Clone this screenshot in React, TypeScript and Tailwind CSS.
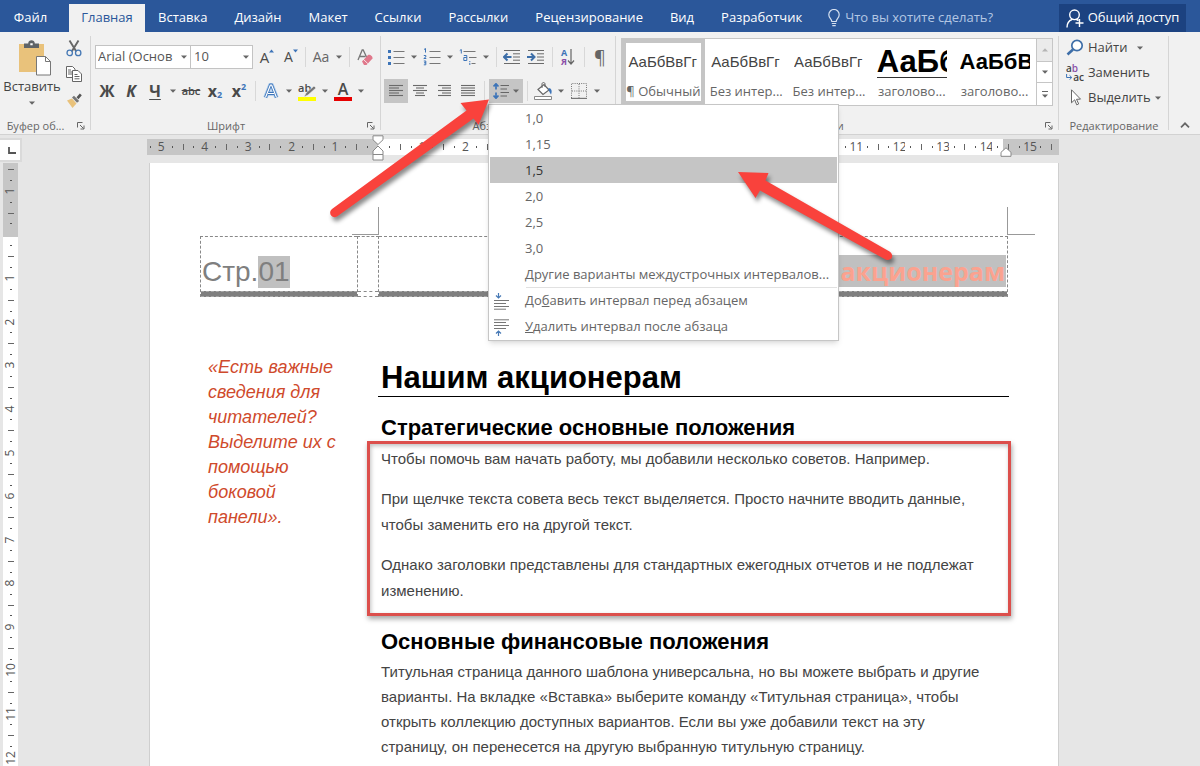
import type { ReactNode } from "react";

const tabs = ["Вставка", "Дизайн", "Макет", "Ссылки", "Рассылки", "Рецензирование", "Вид", "Разработчик"];
const spacings = ["1,0", "1,15", "1,5", "2,0", "2,5", "3,0", "Другие варианты междустрочных интервалов..."];

function Caret() {
  return (
    <svg viewBox="0 0 6 4" className="h-1 w-1.5 text-[#666]" aria-hidden="true">
      <path d="M0 0.5h6L3 3.7z" fill="currentColor" />
    </svg>
  );
}

function Tool({ label, active = false, children }: { label: string; active?: boolean; children: ReactNode }) {
  return (
    <button
      type="button"
      aria-label={label}
      className={`flex h-6 w-6 shrink-0 items-center justify-center text-base font-bold leading-6 text-[#4a4a4a] ${active ? "bg-[#c5c5c5]" : ""}`}
    >
      {children}
    </button>
  );
}

function Drop({ label }: { label: string }) {
  return (
    <button type="button" aria-label={label} className="flex h-6 w-3 shrink-0 items-center justify-center">
      <Caret />
    </button>
  );
}

function Divider() {
  return (
    <span className="flex h-6 w-2 shrink-0 items-center justify-center">
      <span className="h-5 w-px bg-[#d8d8d8]" />
    </span>
  );
}

function Launcher({ label }: { label: string }) {
  return (
    <button type="button" aria-label={label} className="absolute right-1 bottom-0.5 flex h-3 w-3 items-center justify-center">
      <svg viewBox="0 0 8 8" className="h-2 w-2" fill="none" stroke="#666" aria-hidden="true">
        <path d="M0.5 5.5v-5h5M3 3l3.6 3.6M7 3.5V7H3.5" />
      </svg>
    </button>
  );
}

function Group({ title, launcher = true, className, children }: { title: string; launcher?: boolean; className: string; children: ReactNode }) {
  return (
    <section aria-label={title} className={`relative flex flex-col ${className}`}>
      <div className="flex-1">{children}</div>
      <h2 className={`h-4 text-[11px] leading-4 whitespace-nowrap text-[#666] ${launcher ? "pr-5 text-center" : "text-center"}`}>{title}</h2>
      {launcher && <Launcher label={`${title}: параметры`} />}
      <span className="absolute top-1 right-0 bottom-1 w-px bg-[#d5d5d5]" />
    </section>
  );
}

function Lines({ rows }: { rows: [number, number][] }) {
  return (
    <svg viewBox="0 0 16 14" className="h-3.5 w-4" stroke="#6a6a6a" aria-hidden="true">
      {rows.map(([a, b], i) => (
        <path key={i} d={`M${a} ${1.5 + i * 2.5}H${b}`} strokeWidth="1.1" />
      ))}
    </svg>
  );
}

function Clipboard() {
  return (
    <Group title="Буфер об..." className="w-[91px] shrink-0">
      <div className="flex pt-2">
        <button type="button" className="flex w-16 flex-col items-center text-[13px] leading-[18px] text-[#444]">
          <svg viewBox="0 0 34 36" className="ml-1.5 h-9 w-[34px]" aria-hidden="true">
            <path d="M1 4h25v28H1z" fill="#e9c27b" />
            <path d="M6 3.500h4.200C10.200-.8 16.800-.8 16.800 3.500H21V8H6z" fill="#5f6468" />
            <path d="M12.300 3.300h2.400v2h-2.400z" fill="#fff" />
            <path d="M18.500 16.500h9l5 5v13.500h-14z" fill="#fff" stroke="#777" />
            <path d="M27.500 16.500v5h5" fill="none" stroke="#777" />
          </svg>
          <span className="mt-px">Вставить</span>
          <span className="mt-1.5">
            <Caret />
          </span>
        </button>
        <div className="-ml-0.5 flex flex-col gap-0.5">
          <Tool label="Вырезать">
            <svg viewBox="0 0 16 17" className="-mt-2 h-[17px] w-4" fill="none" aria-hidden="true">
              <path d="M3.500 0.500l6.800 11M12.500 0.500l-6.800 11" stroke="#666" strokeWidth="1.900" />
              <circle cx="3.700" cy="12.900" r="2.700" stroke="#4779b5" strokeWidth="1.300" />
              <circle cx="12.200" cy="12.900" r="2.700" stroke="#4779b5" strokeWidth="1.300" />
            </svg>
          </Tool>
          <Tool label="Копировать">
            <svg viewBox="0 0 16 16" className="-mt-2 h-4 w-4" fill="#fff" stroke="#666" aria-hidden="true">
              <path d="M.5.5h6l2.500 2.500v8.500H.5zM2 4h3M2 6h4M2 8h4" />
              <path d="M6.500 4.500h5.500l3.500 3.500v7.500h-9zM8.500 8.500h3M8.500 10.500h5M8.500 12.800h5" />
            </svg>
          </Tool>
          <Tool label="Формат по образцу">
            <svg viewBox="0 0 16 15" className="-mt-2 h-[15px] w-4" aria-hidden="true">
              <path d="M1 7.500l5-2 4.500 5-4 4.500z" fill="#e9c27b" />
              <path d="M6 4.500l2-1.700 5.200 5.200-2.200 1.800z" fill="#777" />
              <path d="M10.500 4.200l3.300-3.800 2 1.800-3.300 4z" fill="#555" />
            </svg>
          </Tool>
        </div>
      </div>
    </Group>
  );
}

function FontGroup() {
  return (
    <Group title="Шрифт" className="w-[290px] shrink-0">
      <div className="flex flex-col gap-2.5 pt-[13px] pl-1">
        <div className="flex items-center">
          <div className="relative flex">
            <select aria-label="Шрифт" className="h-6 w-24 appearance-none border border-[#c3c3c3] bg-white pr-3 pl-0.5 text-[13px] text-[#555]">
              <option>Arial (Основ</option>
            </select>
            <span className="pointer-events-none absolute top-2 right-1 flex h-2 items-center">
              <Caret />
            </span>
          </div>
          <div className="relative -ml-px flex">
            <select aria-label="Размер шрифта" className="h-6 w-[63px] appearance-none border border-[#c3c3c3] bg-white pl-[3px] text-[13px] text-[#555]">
              <option>10</option>
            </select>
            <span className="pointer-events-none absolute top-2 right-1 flex h-2 items-center">
              <Caret />
            </span>
          </div>
          <Tool label="Увеличить размер шрифта">
            <span className="flex pl-1 text-[15px] font-normal">
              A
              <svg viewBox="0 0 5 4" className="mt-1 h-1 w-[5px]" fill="#3d74b8" aria-hidden="true">
                <path d="M0 3.500h5L2.500.5z" />
              </svg>
            </span>
          </Tool>
          <Tool label="Уменьшить размер шрифта">
            <span className="flex pl-1 text-sm leading-6 font-normal">
              A
              <svg viewBox="0 0 5 4" className="mt-1 h-1 w-[5px]" fill="#3d74b8" aria-hidden="true">
                <path d="M0 .5h5L2.500 3.500z" />
              </svg>
            </span>
          </Tool>
          <Divider />
          <Tool label="Регистр">
            <span className="text-sm font-normal text-[#666]">Aa</span>
          </Tool>
          <Drop label="Варианты регистра" />
          <Divider />
          <Tool label="Удалить форматирование">
            <svg viewBox="0 0 17 17" className="h-[17px] w-[17px]" aria-hidden="true">
              <path d="M1 11L5.200 1h1L10 9M2.800 7.500h5.500" fill="none" stroke="#777" strokeWidth="1.300" />
              <path d="M5 12.500l6-6.500c2-1 5 1.500 4.500 3.500l-6 6.500H7z" fill="#e0788b" />
              <path d="M6.300 10.300l4.500 4.300" stroke="#fff" strokeWidth=".8" />
            </svg>
          </Tool>
        </div>
        <div className="flex items-center">
          <Tool label="Полужирный">Ж</Tool>
          <Tool label="Курсив">
            <span className="italic">К</span>
          </Tool>
          <Tool label="Подчёркнутый">
            <span className="underline underline-offset-2">Ч</span>
          </Tool>
          <Drop label="Вид подчёркивания" />
          <Tool label="Зачёркнутый">
            <span className="text-[11px] font-semibold line-through">abc</span>
          </Tool>
          <Tool label="Подстрочный">
            <span className="text-base leading-6">x</span>
            <span className="pt-2 text-[9px] text-[#3d74b8]">2</span>
          </Tool>
          <Tool label="Надстрочный">
            <span className="text-base leading-6">x</span>
            <span className="pb-2 text-[9px] text-[#3d74b8]">2</span>
          </Tool>
          <Divider />
          <Tool label="Текстовые эффекты">
            <svg viewBox="0 0 16 17" className="h-[17px] w-4" fill="none" strokeLinejoin="round" aria-hidden="true">
              <path d="M2.500 14.500L7.400 2h1.200l4.900 12.500M5 10.500h6" stroke="#a8c8ea" strokeWidth="4.500" />
              <path d="M2.500 14.500L7.400 2h1.200l4.900 12.500M5 10.500h6" stroke="#3d74b8" strokeWidth="2.800" />
              <path d="M2.500 14.500L7.400 2h1.200l4.900 12.500M5 10.500h6" stroke="#fff" strokeWidth="1.200" />
            </svg>
          </Tool>
          <Drop label="Варианты эффектов" />
          <Tool label="Цвет выделения">
            <span className="relative flex h-[19px] w-[18px] items-start border-b-4 border-[#ffff00] text-[11px] leading-[11px] font-semibold">
              ab
              <svg viewBox="0 0 14 14" className="absolute top-0.5 right-0 h-3.5 w-3.5" aria-hidden="true">
                <path d="M2 13l2-4 8-7 2 2-8 7z" fill="#777" stroke="#f1f1f1" strokeWidth=".6" />
              </svg>
            </span>
          </Tool>
          <Drop label="Цвета выделения" />
          <Tool label="Цвет текста">
            <span className="flex h-[19px] w-[18px] items-center justify-center border-b-4 border-[#e60000] text-base leading-4 font-semibold">A</span>
          </Tool>
          <Drop label="Цвета текста" />
        </div>
      </div>
    </Group>
  );
}

function SpacingMenu() {
  return (
    <div role="menu" aria-label="Междустрочный интервал" className="absolute top-full -left-px z-20 mt-px w-[351px] border border-[#c6c6c6] bg-white px-px text-[13px] text-[#666] shadow-md">
      {spacings.map((s) => (
        <button key={s} type="button" role="menuitem" className={`block h-[26px] w-full pl-[35px] text-left leading-[26px] whitespace-nowrap ${s === "1,5" ? "bg-[#c5c5c5] text-[#333]" : ""}`}>
          {s}
        </button>
      ))}
      <div className="ml-9 h-px bg-[#e1e1e1]" />
      <button type="button" role="menuitem" className="flex h-[26px] w-full items-center gap-4 pl-[3px] text-left">
        <svg viewBox="0 0 16 17" className="h-[17px] w-4" fill="none" aria-hidden="true">
          <path d="M5.500 0v4.500M3 2.500l2.500 2.500L8 2.500" stroke="#4779b5" strokeWidth="1.200" />
          <path d="M1 7.500h15M1 10.500h12M1 13.500h15M1 16.200h12" stroke="#777" />
        </svg>
        <span>
          До<u>б</u>авить интервал перед абзацем
        </span>
      </button>
      <button type="button" role="menuitem" className="flex h-[26px] w-full items-center gap-4 pl-[3px] text-left">
        <svg viewBox="0 0 16 17" className="h-[17px] w-4" fill="none" aria-hidden="true">
          <path d="M1 .8h15M1 3.500h12M1 6.500h15M1 9.500h12" stroke="#777" />
          <path d="M5.500 17v-5M3 14.500l2.500-2.500L8 14.500" stroke="#4779b5" strokeWidth="1.200" />
        </svg>
        <span>
          <u>У</u>далить интервал после абзаца
        </span>
      </button>
    </div>
  );
}

function Indent({ right = false }: { right?: boolean }) {
  return (
    <svg viewBox="0 0 18 16" className="h-4 w-[18px]" fill="none" aria-hidden="true">
      <path d="M1 1.500h16M10 4.800h7M10 8h7M10 11.200h7M1 14.500h16" stroke="#6a6a6a" />
      <path d={right ? "M0 8h7M4 4.500L7.500 8 4 11.500" : "M1.500 8h7M4.500 4.500L1 8l3.500 3.500"} stroke="#3d6ea8" strokeWidth="2" />
    </svg>
  );
}

function Paragraph() {
  return (
    <Group title="Абзац" className="w-[235px] shrink-0">
      <div className="flex flex-col gap-2.5 pt-[13px] pl-[3px]">
        <div className="flex items-center">
          <Tool label="Маркеры">
            <svg viewBox="0 0 18 16" className="h-4 w-[18px]" aria-hidden="true">
              <path d="M1 1h3v3H1zM1 7h3v3H1zM1 13h3v3H1z" fill="#3d74b8" />
              <path d="M6.500 2.500h11M6.500 8.500h11M6.500 14.500h11" stroke="#777" />
            </svg>
          </Tool>
          <Drop label="Библиотека маркеров" />
          <Tool label="Нумерация">
            <svg viewBox="0 0 18 18" className="h-[18px] w-[18px]" aria-hidden="true">
              <path d="M1 1.500l1.500-1v4M.8 7.500h2v1.500l-2 1.500h2.500M.8 13h2v1.800h-1.500 1.500v2h-2" fill="none" stroke="#3d74b8" />
              <path d="M6.500 3.500h11M6.500 9.500h11M6.500 15.500h11" stroke="#777" />
            </svg>
          </Tool>
          <Drop label="Форматы нумерации" />
          <Tool label="Многоуровневый список">
            <svg viewBox="0 0 18 16" className="h-4 w-[18px]" fill="none" aria-hidden="true">
              <path d="M.8 1.500l1.500-1v4M4.800 6.500h3v5h-3v-3h3M10.800 12v1.200M10.800 14v2" stroke="#3d74b8" />
              <path d="M4.500 2.500h12M10 8.500h7.500M12.500 14.500h4" stroke="#777" />
            </svg>
          </Tool>
          <Drop label="Библиотека списков" />
          <Divider />
          <Tool label="Уменьшить отступ">
            <Indent />
          </Tool>
          <Tool label="Увеличить отступ">
            <Indent right />
          </Tool>
          <Divider />
          <Tool label="Сортировка">
            <span className="flex flex-col text-[9px] leading-[9px]">
              <span className="text-[#3d74b8]">А</span>
              <span className="text-[#8a4fa8]">Я</span>
            </span>
            <svg viewBox="0 0 8 16" className="h-4 w-2" fill="none" stroke="#666" strokeWidth="1.200" aria-hidden="true">
              <path d="M4 0v15M1 11.500l3 3.500 3-3.500" />
            </svg>
          </Tool>
          <Divider />
          <Tool label="Непечатаемые знаки">
            <span className="text-lg font-normal text-[#666]">¶</span>
          </Tool>
        </div>
        <div className="flex items-center">
          <Tool label="По левому краю" active>
            <Lines rows={[[1, 15], [1, 11], [1, 15], [1, 11], [1, 15]]} />
          </Tool>
          <Tool label="По центру">
            <Lines rows={[[1, 15], [4, 12], [1, 15], [4, 12], [3, 13]]} />
          </Tool>
          <Tool label="По правому краю">
            <Lines rows={[[2, 15], [6, 15], [2, 15], [6, 15], [2, 15]]} />
          </Tool>
          <Tool label="По ширине">
            <Lines rows={[[1, 15], [1, 15], [1, 15], [1, 15], [1, 15]]} />
          </Tool>
          <Divider />
          <div className="relative ml-px">
            <button type="button" aria-label="Интервал" aria-haspopup="menu" aria-expanded="true" className="flex h-6 w-[34px] items-center justify-between bg-[#c5c5c5] pr-1 pl-1">
              <svg viewBox="0 0 16 16" className="h-4 w-4" fill="none" aria-hidden="true">
                <path d="M3 1v5.500M.5 3.500L3 .8l2.500 2.700M3 9.500V15M.5 12.500L3 15.200l2.500-2.700" stroke="#3d74b8" strokeWidth="1.700" />
                <path d="M7.500 2.500H16M7.500 6H14M7.500 9.500H16M7.500 13H14" stroke="#666" />
              </svg>
              <Caret />
            </button>
            <SpacingMenu />
          </div>
          <Divider />
          <Tool label="Заливка">
            <svg viewBox="0 0 19 18" className="h-[18px] w-[19px]" fill="none" aria-hidden="true">
              <path d="M4 7.500l6-5 5 5.500-6 4.500z" fill="#fff" stroke="#666" strokeWidth="1.200" />
              <path d="M8 6V2c0-2 3-2 3 0v3" stroke="#666" />
              <path d="M14.500 6c3 0 4 3 2.500 6.500-1-1-1.500-3-2.500-4.500z" fill="#3d74b8" />
              <path d="M.5 14.500h17v3H.5z" fill="#fff" stroke="#888" />
            </svg>
          </Tool>
          <Drop label="Цвет заливки" />
          <Tool label="Границы">
            <svg viewBox="0 0 16 16" className="h-4 w-4" fill="none" stroke="#777" aria-hidden="true">
              <path d="M.5 15V.5h15V15M8 1v14M1 8h14" strokeDasharray="1 1.200" />
              <path d="M0 15.500h16" strokeWidth="1.400" />
            </svg>
          </Tool>
          <Drop label="Виды границ" />
        </div>
      </div>
    </Group>
  );
}

const styleItems = [
  { sample: "АаБбВвГг", name: "¶ Обычный", look: "text-[15px] text-[#444]" },
  { sample: "АаБбВвГг", name: "Без интер...", look: "text-[15px] text-[#444]" },
  { sample: "АаБбВвГг", name: "Без интер...", look: "text-[15px] text-[#444]" },
  { sample: "АаБбВ", name: "заголово...", look: "border-b border-[#333] text-[31px] font-bold text-black" },
  { sample: "АаБбВв", name: "заголово...", look: "text-[22px] font-bold text-black" },
];

function Styles() {
  return (
    <Group title="Стили" className="min-w-0 flex-1">
      <div className="pt-1.5 pr-1.5 pl-[5px]">
        <div className="flex h-[68px] border border-[#c6c6c6] bg-white">
          <div className="grid min-w-0 flex-1 grid-cols-5">
            {styleItems.map((s, i) => (
              <button key={i} type="button" className={`flex min-w-0 flex-col items-center border-4 pt-0.5 text-[13px] text-[#666] ${i === 0 ? "border-[#c5c5c5]" : "border-transparent"}`}>
                <span className={`block h-[33px] w-[70px] overflow-hidden text-left font-['Liberation_Sans',sans-serif] leading-[34px] whitespace-nowrap ${s.look}`}>{s.sample}</span>
                <span className="mt-[3px] w-[75px] text-center leading-5 whitespace-nowrap">{s.name}</span>
              </button>
            ))}
          </div>
          <div className="grid w-4 grid-rows-3 border-l border-[#c6c6c6]">
            <button type="button" aria-label="Предыдущие стили" className="flex items-center justify-center bg-[#ebebeb]">
              <svg viewBox="0 0 6 4" className="h-1 w-1.5" fill="#b5b5b5" aria-hidden="true">
                <path d="M0 3.500h6L3 .3z" />
              </svg>
            </button>
            <button type="button" aria-label="Следующие стили" className="flex items-center justify-center border-y border-[#c6c6c6]">
              <Caret />
            </button>
            <button type="button" aria-label="Все стили" className="flex flex-col items-center justify-center gap-0.5">
              <span className="h-px w-1.5 bg-[#666]" />
              <Caret />
            </button>
          </div>
        </div>
      </div>
    </Group>
  );
}

function Editing() {
  return (
    <Group title="Редактирование" launcher={false} className="w-[110px] shrink-0">
      <div className="flex flex-col pt-[3px] pl-[7px] text-[13px] text-[#444]">
        <button type="button" className="flex h-[25px] items-center gap-1">
          <svg viewBox="0 0 18 17" className="h-[17px] w-[18px]" fill="none" aria-hidden="true">
            <circle cx="11" cy="6.500" r="5.200" fill="#fff" stroke="#3d6ea8" strokeWidth="1.700" />
            <path d="M7 10.500l-5.500 5" stroke="#3d6ea8" strokeWidth="2.600" />
          </svg>
          Найти
          <span className="ml-1.5">
            <Caret />
          </span>
        </button>
        <button type="button" className="flex h-[25px] items-center gap-1">
          <span className="relative flex h-[18px] w-[18px] flex-col text-[10px] leading-[9px] font-semibold">
            <span className="text-left">
              a<span className="text-[#8a4fa8]">b</span>
            </span>
            <span className="text-right">ac</span>
            <svg viewBox="0 0 7 6" className="absolute bottom-0.5 left-0 h-1.5 w-[7px]" fill="none" stroke="#3d74b8" aria-hidden="true">
              <path d="M.6 0v3.500h5M3.500 1.300l2.300 2.200-2.300 2.200" />
            </svg>
          </span>
          Заменить
        </button>
        <button type="button" className="flex h-[25px] items-center gap-1">
          <svg viewBox="0 0 18 17" className="h-[17px] w-[18px]" fill="#fff" stroke="#666" aria-hidden="true">
            <path d="M5.500.8v13l3.200-3 2 5 2-.9-2.200-4.600 4-.2z" />
          </svg>
          Выделить
          <Caret />
        </button>
      </div>
    </Group>
  );
}

const columnMarks = Array.from({ length: 84 }, (_, i) => i);
const rowMarks = Array.from({ length: 56 }, (_, i) => i);

function HorizontalRuler() {
  return (
    <div className="relative flex h-4 w-[912px] shrink-0 bg-[#c6c6c6]">
      <div className="-ml-0.5 flex w-full overflow-hidden text-xs leading-4 text-[#555]">
        {columnMarks.map((i) => {
          const step = (i + 3) % 4;
          const value = Math.abs(5 - (i - 1) / 4);
          const tone = i === 21 ? "bg-[linear-gradient(90deg,#c6c6c6_50%,#fff_50%)]" : i > 21 && i < 79 ? "bg-white" : "";
          return (
            <span key={i} className={`flex min-w-0 flex-1 items-center justify-center whitespace-nowrap ${tone}`}>
              {step === 0 && value !== 0 && <span>{value}</span>}
              {step % 2 === 1 && <span className="h-0.5 w-px bg-[#555]" />}
              {step === 2 && <span className="h-1.5 w-px bg-[#666]" />}
            </span>
          );
        })}
      </div>
      <svg viewBox="0 0 12 27" className="absolute -top-1 left-[225px] h-[27px] w-3" fill="#fff" stroke="#888" aria-hidden="true">
        <path d="M1 .8h10v4L6 9.500 1 4.800zM6 11l5 5v3.500H1V16zM1 19.500h10V25H1z" />
      </svg>
      <svg viewBox="0 0 12 10" className="absolute top-2 left-[853px] h-2.5 w-3" fill="#fff" stroke="#888" aria-hidden="true">
        <path d="M6 .8l5 4.500v4H1v-4z" />
      </svg>
    </div>
  );
}

function VerticalRuler() {
  return (
    <div className="ml-[3px] w-[15px] shrink-0 overflow-hidden bg-white">
      <div className="flex h-[610px] flex-col text-xs text-[#555]">
        {rowMarks.map((i) => {
          const step = (i + 2) % 4;
          const value = Math.abs((i - 6) / 4);
          const tone = i < 6 ? "bg-[#c6c6c6]" : i === 6 ? "bg-[linear-gradient(#c6c6c6_80%,#fff_80%)]" : "";
          return (
            <span key={i} className={`flex min-h-0 flex-1 items-center justify-center pt-0.5 ${tone}`}>
              {step === 0 && value !== 0 && <span className="-rotate-90 leading-3">{value}</span>}
              {step % 2 === 1 && <span className="h-px w-0.5 bg-[#555]" />}
              {step === 2 && <span className="h-px w-1.5 bg-[#666]" />}
            </span>
          );
        })}
      </div>
    </div>
  );
}

function HeaderTable() {
  return (
    <div className="relative mr-[50px] ml-[50px] flex h-[61px] font-['Liberation_Sans',sans-serif]">
      <div className="flex w-[157px] flex-col border-t border-l border-dashed border-[#888]">
        <p className="mt-[19px] h-8 pl-px text-[28px] leading-8 text-[#7f7f7f]">
          Стр.<span className="inline-block h-8 bg-[#c0c0c0]">01</span>
        </p>
        <div className="mt-auto h-1.5 border-y border-dashed border-[#a8a8a8] bg-[#7f7f7f]" />
      </div>
      <div className="flex w-[22px] flex-col border-x border-t border-dashed border-[#888]">
        <div className="mt-auto h-1.5 border-y border-dashed border-[#888]" />
      </div>
      <div className="flex flex-1 flex-col items-end border-t border-r border-dashed border-[#888]">
        <p className="mt-[18px] mr-px h-8 bg-[#c0c0c0] pr-px font-['Open_Sans',sans-serif] text-[25px] leading-8 font-bold text-[#fba28f]">Нашим акционерам</p>
        <div className="mt-auto h-1.5 w-full border-y border-dashed border-[#a8a8a8] bg-[#7f7f7f]" />
      </div>
      <span className="absolute -top-[29px] left-[152px] h-7 w-[27px] border-r border-b border-[#999]" />
      <span className="absolute -top-[29px] -right-[27px] h-7 w-7 border-b border-l border-[#999]" />
    </div>
  );
}

function Page() {
  return (
    <article className="w-[910px] shrink-0 border-x border-[#cfcfcf] bg-white pt-[73px] font-['Liberation_Sans',sans-serif]">
      <HeaderTable />
      <div className="flex pr-[49px] pl-[58px]">
        <aside className="w-[170px] pt-[58px] text-lg leading-[25px] text-[#cf4a2c] italic">
          «Есть важные
          <br />
          сведения для
          <br />
          читателей?
          <br />
          Выделите их с
          <br />
          помощью
          <br />
          боковой
          <br />
          панели».
        </aside>
        <div className="min-w-0 flex-1 pt-[63px] text-[15px] text-[#444]">
          <h1 className="border-b border-black pl-[3px] text-[31px] leading-9 font-bold text-black">Нашим акционерам</h1>
          <h2 className="mt-[17px] pl-[3px] text-[22px] leading-[27px] font-bold text-black">Стратегические основные положения</h2>
          <div className="-mr-0.5 -ml-[11px] flex flex-col gap-3.5 border-[3px] border-[#dc4f4c] pt-0.5 pb-[9px] pl-[11px] leading-[26px] shadow-[1px_3px_5px_rgba(0,0,0,0.35),inset_1px_2px_4px_rgba(0,0,0,0.25)]">
            <p>Чтобы помочь вам начать работу, мы добавили несколько советов. Например.</p>
            <p>
              При щелчке текста совета весь текст выделяется. Просто начните вводить данные,
              <br />
              чтобы заменить его на другой текст.
            </p>
            <p>
              Однако заголовки представлены для стандартных ежегодных отчетов и не подлежат
              <br />
              изменению.
            </p>
          </div>
          <h2 className="mt-3 pl-[3px] text-[22px] leading-7 font-bold text-black">Основные финансовые положения</h2>
          <p className="mt-[3px] pl-[3px] leading-[25px] whitespace-nowrap">
            Титульная страница данного шаблона универсальна, но вы можете выбрать и другие
            <br />
            варианты. На вкладке «Вставка» выберите команду «Титульная страница», чтобы
            <br />
            открыть коллекцию доступных вариантов. Если вы уже добавили текст на эту
            <br />
            страницу, он перенесется на другую выбранную титульную страницу.
          </p>
        </div>
      </div>
    </article>
  );
}

function Arrows() {
  return (
    <svg viewBox="0 0 600 180" className="pointer-events-none absolute top-[95px] left-[320px] z-30 h-[180px] w-[600px] drop-shadow-[2px_4px_2px_rgba(0,0,0,0.45)]" fill="#f9423c" aria-hidden="true">
      <path d="M169 4.500L158.500 30l-5-6.500L17 121.500c-5 3-9.500-3.500-5-7.500L146.500 15.500l-6-7.500z" />
      <path d="M418 77l30.500 1-3 7.500 124 71c5.500 4 2 10.500-4 8L440 95.500l-4.500 7.500z" />
    </svg>
  );
}

export default function App() {
  return (
    <div className="relative flex h-screen flex-col overflow-hidden bg-[#e6e6e6] font-['Open_Sans',sans-serif] text-[13px]">
      <nav aria-label="Вкладки ленты" className="flex h-8 shrink-0 items-stretch bg-[#2b579a] pt-1 pr-3.5 text-[13px] text-white">
        <button type="button" className="w-[69px] pr-2 text-center">
          Файл
        </button>
        <button type="button" className="w-[76px] bg-[#f1f1f1] text-center text-[#2b579a]">
          Главная
        </button>
        <div className="flex items-stretch gap-px">
          {tabs.map((t) => (
            <button key={t} type="button" className="px-[13px] whitespace-nowrap">
              {t}
            </button>
          ))}
        </div>
        <label className="ml-3 flex items-center gap-1">
          <svg viewBox="0 0 14 18" className="h-[18px] w-3.5" fill="none" stroke="#d5e0f0" strokeWidth="1.200" aria-hidden="true">
            <path d="M4.800 12.500c0-2.500-3-3.500-3-6.800a5.200 5.200 0 0 1 10.400 0c0 3.300-3 4.300-3 6.800zM4.800 14.500h4.400M5.300 16.700h3.400" />
          </svg>
          <input type="text" aria-label="Помощник" placeholder="Что вы хотите сделать?" className="w-40 bg-transparent text-[13px] outline-none placeholder:text-[#b4c7e4]" />
        </label>
        <button type="button" className="ml-auto flex w-[127px] items-center justify-center gap-1 bg-[#1c4280]">
          <svg viewBox="0 0 18 19" className="h-[19px] w-[18px]" fill="none" stroke="#fff" strokeWidth="1.400" aria-hidden="true">
            <circle cx="8.500" cy="5.800" r="4.800" />
            <path d="M1 18.500c0-4.500 2.200-7 5-8M10.500 10.500l2 1M13.500 10v8M9.500 14h8" />
          </svg>
          Общий доступ
        </button>
      </nav>
      <div className="flex h-[103px] shrink-0 border-b border-[#d2d2d2] bg-[#f1f1f1]">
        <Clipboard />
        <FontGroup />
        <Paragraph />
        <Styles />
        <Editing />
        <button type="button" aria-label="Свернуть ленту" className="flex w-[31px] shrink-0 items-end justify-center pb-1.5">
          <svg viewBox="0 0 10 6" className="h-1.5 w-2.5" fill="none" stroke="#666" strokeWidth="1.700" aria-hidden="true">
            <path d="M1 5.300l4-4 4 4" />
          </svg>
        </button>
      </div>
      <div className="flex h-7 shrink-0">
        <button type="button" aria-label="Тип табуляции" className="mt-[3px] flex h-6 w-[22px] shrink-0 items-center justify-center border-2 border-l-0 border-[#dadada] bg-white">
          <svg viewBox="0 0 8 7" className="ml-1 h-[7px] w-2" fill="none" stroke="#555" strokeWidth="1.800" aria-hidden="true">
            <path d="M1 0v6h7" />
          </svg>
        </button>
        <div className="flex flex-1 justify-center pt-1 pr-4">
          <HorizontalRuler />
        </div>
      </div>
      <main className="flex min-h-0 flex-1">
        <VerticalRuler />
        <div className="flex flex-1 justify-center pr-[14px] pl-1">
          <Page />
        </div>
      </main>
      <Arrows />
    </div>
  );
}
